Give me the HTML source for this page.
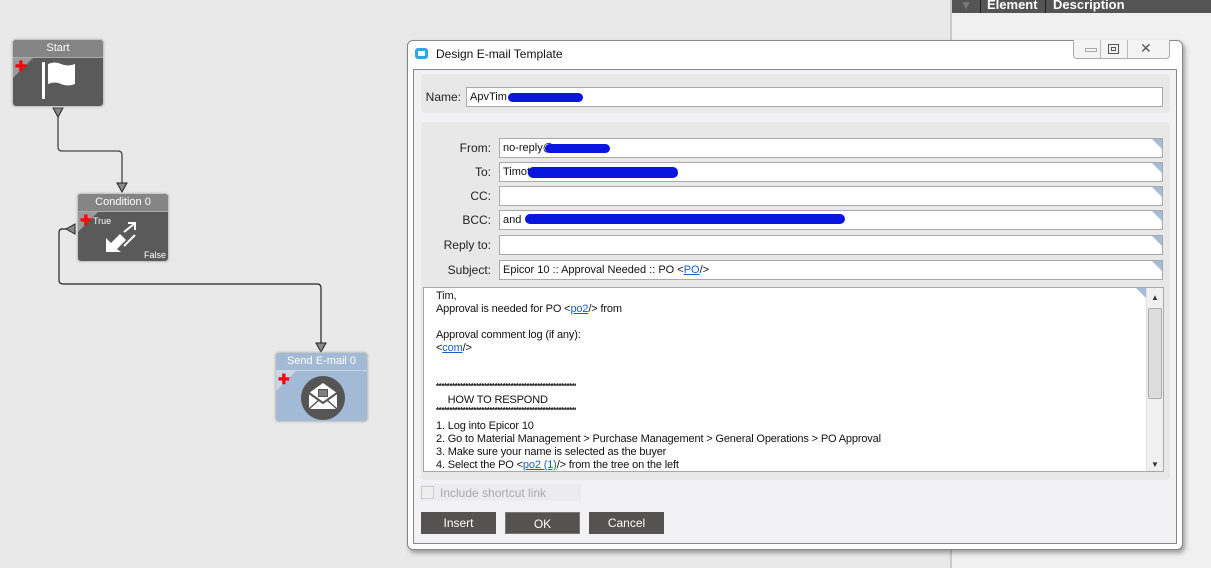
<!DOCTYPE html>
<html><head><meta charset="utf-8"><style>
*{margin:0;padding:0;box-sizing:border-box}
body{width:1211px;height:568px;background:#e9e9e9;position:relative;overflow:hidden;font-family:"Liberation Sans",sans-serif;font-size:12px;color:#111}
.a{position:absolute}
.node{position:absolute;border:1px solid #c8c8c8;border-radius:4px;background:#5a5a5a;overflow:hidden;box-shadow:0 0 2px #bbb}
.node .h{height:18px;background:#858585;color:#fff;text-align:center;font-size:11px;line-height:17px;border-bottom:1px solid #aaa}
.tri{position:absolute;left:0;top:18px;width:0;height:0;border-top:20px solid #9a9a9a;border-right:20px solid transparent}
.plus{position:absolute;left:2px;top:20px;color:#f00;font-weight:bold;font-size:14px;line-height:12px}
.lbl{position:absolute;width:70px;text-align:right;font-size:12px;color:#222}
.inp{position:absolute;left:499px;width:664px;height:20px;background:#fff;border:1px solid #a8a8a8;font-size:11px;line-height:18px;padding-left:3px;overflow:hidden;white-space:nowrap}
.inp .c{position:absolute;right:0;top:0;border-top:10px solid #a5bbd6;border-left:10px solid transparent}
.scr{position:absolute;width:140px;height:9px;background:#0a16e0;border-radius:5px}
.btn{position:absolute;top:512px;width:75px;height:22px;background:#555352;color:#fff;text-align:center;line-height:22px;font-size:12px}
.body div{height:13px;line-height:13px;font-size:11px;white-space:nowrap;letter-spacing:-0.15px}
.body div.st{font-size:8px;letter-spacing:-0.45px;font-weight:bold;overflow:hidden;width:140px}
a{color:#1a5fc4;text-decoration:underline}
</style></head><body>
<!-- right panel -->
<div class="a" style="left:950px;top:0;width:261px;height:568px;background:#f0f0f0;border-left:2px solid #c9c9d4"></div>
<div class="a" style="left:952px;top:0;width:259px;height:13px;background:#545454;color:#fff;font-weight:bold;font-size:13px;line-height:9px">
<span class="a" style="left:0;width:29px;height:13px;border-right:1px solid #222;color:#777;text-align:center">▾</span>
<span class="a" style="left:30px;width:64px;height:13px;border-right:1px solid #222;padding-left:5px">Element</span>
<span class="a" style="left:95px;padding-left:6px">Description</span></div>

<!-- connectors -->
<svg class="a" style="left:0;top:0" width="400" height="568">
<path d="M58 108 V147 Q58 151 62 151 H118 Q122 151 122 155 V188" fill="none" stroke="#444" stroke-width="1.3"/>
<path d="M68 229 H62 Q59 229 59 233 V280 Q59 284 63 284 H317 Q321 284 321 288 V348" fill="none" stroke="#222" stroke-width="1.2"/>
<path d="M53 108 H63 L58 117 Z" fill="#888" stroke="#222"/>
<path d="M117 183 H127 L122 192 Z" fill="#888" stroke="#222"/>
<path d="M316 343 H326 L321 352 Z" fill="#888" stroke="#222"/>
<path d="M75 224 V234 L66 229 Z" fill="#888" stroke="#222"/>
</svg>

<div class="node" style="left:12px;top:39px;width:92px;height:68px"><div class="h">Start</div><div class="tri"></div><div class="plus">✚</div>
<svg class="a" style="left:28px;top:22px" width="36" height="38"><rect x="1" y="0" width="3" height="37" rx="1" fill="#fff"/><path d="M7 2 Q14 -1 20 2 Q27 5 34 2 V22 Q27 25 20 22 Q14 19 7 22 Z" fill="#fff"/></svg></div>

<div class="node" style="left:77px;top:193px;width:92px;height:69px"><div class="h">Condition 0</div><div class="tri"></div><div class="plus">✚</div>
<span class="a" style="left:15px;top:22px;color:#fff;font-size:9px">True</span><span class="a" style="right:2px;bottom:1px;color:#fff;font-size:9px">False</span>
<svg class="a" style="left:26px;top:26px" width="38" height="34"><path d="M2 32 V18 L7 23 L16 14 L22 20 L13 29 L17 32 Z" fill="#fff"/><path d="M20 12 L30 4 M24 3 H31 V10" fill="none" stroke="#fff" stroke-width="2"/><path d="M20 26 L31 15" stroke="#fff" stroke-width="2"/></svg></div>

<div class="node" style="left:275px;top:352px;width:93px;height:70px;background:#a2bad5"><div class="h" style="background:#a2bad5;border-bottom:1px solid #c8d6e6">Send E-mail 0</div><div class="tri" style="border-top-color:#c8d6e6"></div><div class="plus">✚</div>
<svg class="a" style="left:24px;top:22px" width="46" height="46"><circle cx="23" cy="23" r="22" fill="#555"/><path d="M9 18 L23 8 L37 18 V34 H9 Z" fill="#fff"/><path d="M9 18 L23 28 L37 18" fill="none" stroke="#555" stroke-width="2"/><path d="M9 34 L19 25 M37 34 L27 25" stroke="#555" stroke-width="1.5"/><rect x="18" y="14" width="10" height="8" fill="#555"/><path d="M19 16 H27 M19 18 H27 M19 20 H27" stroke="#aaa"/></svg></div>

<!-- dialog -->
<div class="a" style="left:407px;top:40px;width:776px;height:510px;background:#fff;border:1px solid #888;border-radius:6px;box-shadow:2px 3px 5px rgba(0,0,0,.35)"></div>
<div class="a" style="left:415px;top:48px;width:13px;height:11px;background:#2aa7e6;border-radius:3px"><div style="margin:3px;width:7px;height:5px;background:#fff"></div></div>
<div class="a" style="left:436px;top:47px;font-size:12px">Design E-mail Template</div>
<div class="a" style="left:1073px;top:40px;width:97px;height:19px;border:1px solid #aaa;border-top:none;border-radius:0 0 4px 4px;background:#f4f4f4">
<div class="a" style="left:11px;top:8px;width:12px;height:4px;border:1px solid #aaa"></div>
<div class="a" style="left:26px;top:0;width:1px;height:18px;background:#bbb"></div>
<div class="a" style="left:34px;top:4px;width:11px;height:10px;border:1px solid #555"><div style="margin:2px;width:5px;height:4px;border:1px solid #555"></div></div>
<div class="a" style="left:53px;top:0;width:1px;height:18px;background:#bbb"></div>
<div class="a" style="left:66px;top:0px;font-size:14px;color:#555">✕</div></div>
<div class="a" style="left:413px;top:69px;width:764px;height:475px;background:#f2f2f4;border:1px solid #888"></div>
<div class="a" style="left:421px;top:74px;width:749px;height:39px;background:#e8e8e8;border-radius:4px"></div>
<div class="lbl" style="left:391px;top:90px">Name:</div>
<div class="inp" style="left:466px;top:87px;width:697px">ApvTim</div>
<div class="scr" style="left:508px;top:93px;width:75px"></div>
<div class="a" style="left:421px;top:122px;width:749px;height:358px;background:#e8e8e8;border-radius:4px"></div>

<div class="lbl" style="left:421px;top:141px">From:</div><div class="inp" style="top:138px">no-reply@<i class="c"></i></div>
<div class="lbl" style="left:421px;top:165px">To:</div><div class="inp" style="top:162px">Timot<i class="c"></i></div>
<div class="lbl" style="left:421px;top:189px">CC:</div><div class="inp" style="top:186px"><i class="c"></i></div>
<div class="lbl" style="left:421px;top:213px">BCC:</div><div class="inp" style="top:210px">and<i class="c"></i></div>
<div class="lbl" style="left:421px;top:238px">Reply to:</div><div class="inp" style="top:235px"><i class="c"></i></div>
<div class="lbl" style="left:421px;top:263px">Subject:</div><div class="inp" style="top:260px">Epicor 10 :: Approval Needed :: PO &lt;<a>PO</a>/&gt;<i class="c"></i></div>
<div class="scr" style="left:545px;top:144px;width:65px"></div>
<div class="scr" style="left:528px;top:167px;width:150px;height:11px"></div>
<div class="scr" style="left:525px;top:214px;width:320px;height:10px"></div>

<div class="a body" style="left:423px;top:287px;width:741px;height:185px;background:#fff;border:1px solid #a8a8a8;padding:2px 0 0 12px;overflow:hidden">
<div>Tim,</div><div>Approval is needed for PO &lt;<a>po2</a>/&gt; from</div><div></div><div>Approval comment log (if any):</div><div>&lt;<a>com</a>/&gt;</div><div></div><div></div>
<div class="st" style="line-height:12px">**************************************************************</div>
<div>&nbsp;&nbsp;&nbsp;&nbsp;HOW TO RESPOND</div>
<div class="st" style="line-height:8px">**************************************************************</div>
<div>1. Log into Epicor 10</div><div>2. Go to Material Management &gt; Purchase Management &gt; General Operations &gt; PO Approval</div><div>3. Make sure your name is selected as the buyer</div><div>4. Select the PO &lt;<a>po2 (1)</a>/&gt; from the tree on the left</div>
<i class="a" style="right:17px;top:0;border-top:10px solid #a5bbd6;border-left:10px solid transparent"></i>
<div class="a" style="right:0;top:0;width:17px;height:183px;background:#f0f0f0;border-left:1px solid #e0e0e0">
<div class="a" style="left:4px;top:3px;font-size:8px;color:#333">▲</div>
<div class="a" style="left:1px;top:20px;width:14px;height:91px;background:#ddd;border:1px solid #aaa;border-radius:2px"></div>
<div class="a" style="left:4px;top:170px;font-size:8px;color:#333">▼</div></div></div>

<div class="a" style="left:420px;top:484px;width:161px;height:17px;background:#ececee"></div>
<div class="a" style="left:421px;top:486px;width:13px;height:13px;border:1px solid #ccc;background:#eee"></div>
<div class="a" style="left:440px;top:486px;color:#aaa;font-size:12px">Include shortcut link</div>
<div class="btn" style="left:421px">Insert</div>
<div class="btn" style="left:505px;border:1px solid #777">OK</div>
<div class="btn" style="left:589px">Cancel</div>
</body></html>
